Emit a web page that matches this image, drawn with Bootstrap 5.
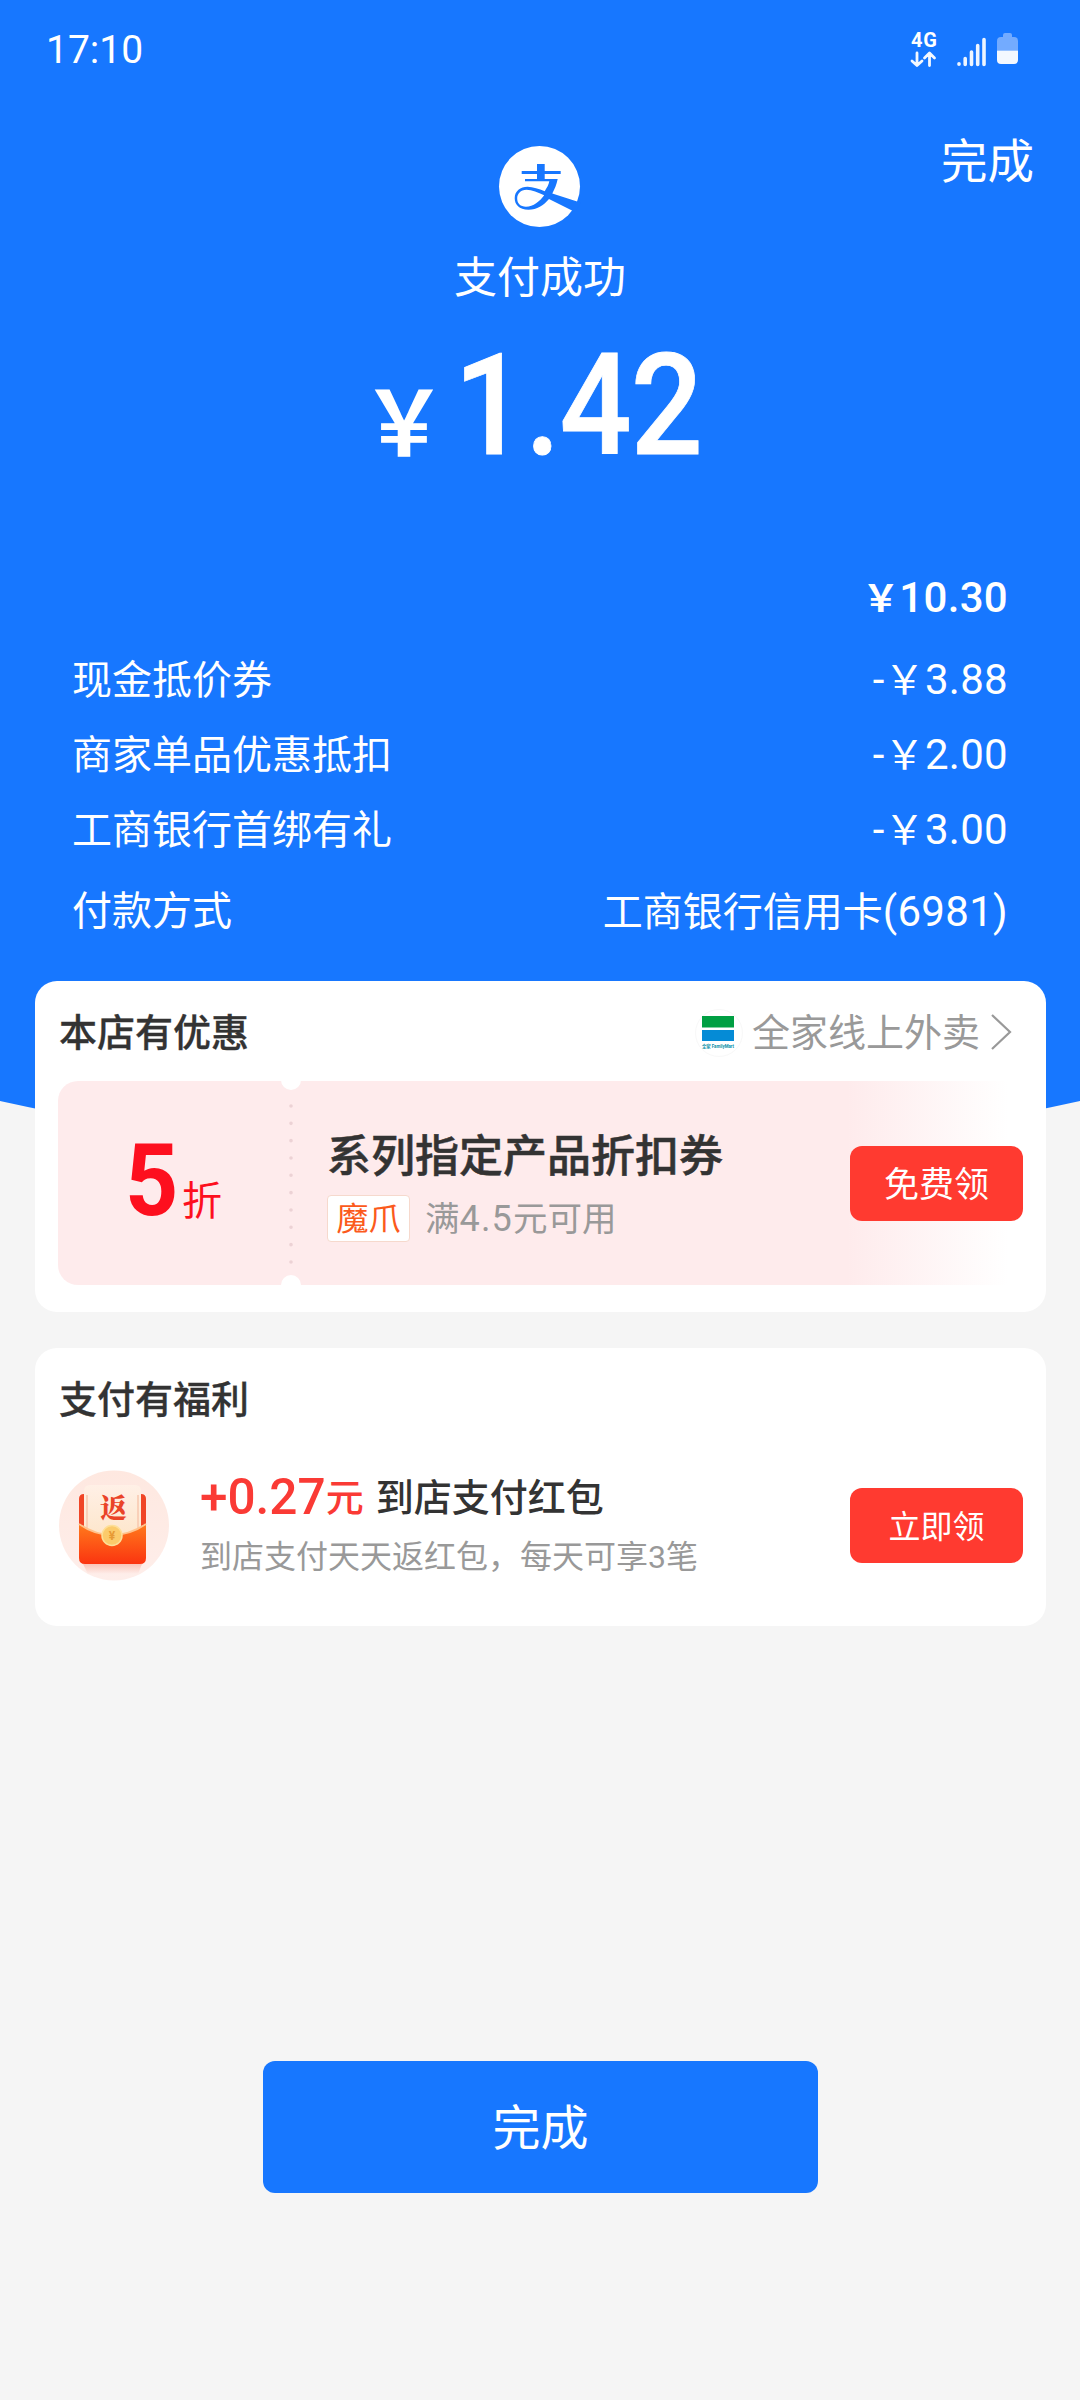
<!DOCTYPE html>
<html lang="zh-CN">
<head>
<meta charset="utf-8">
<meta name="viewport" content="width=device-width, initial-scale=1">
<title>支付成功</title>
<link rel="stylesheet" href="https://cdn.jsdelivr.net/npm/bootstrap@5.3.0/dist/css/bootstrap.min.css">
<style>
body{background:#f5f5f5;color:#333;font-family:Roboto,"Noto Sans CJK SC",sans-serif;min-height:2400px;line-height:1}
svg{display:block;flex:none;overflow:visible}
.pay-hero{height:1170px;background:#1777ff;clip-path:circle(2500px at 50% -1340px);color:#fff}
.status-bar{height:100px;padding:0 61px 0 46px}
.clock{font-size:39px;line-height:100px}
.side-col{width:300px}
.done-link{font-size:46.5px;line-height:60px;margin-top:32px;padding-right:46px;color:#fff}
.pay-logo{margin:46px 1px 0 0}
.pay-state{font-size:43px;line-height:60px;margin-top:21px}
.pay-total{height:140px;line-height:140px;margin-top:28px;width:366px;padding-left:2px}
.yen-big{font-size:90px;font-weight:700;display:inline-block;line-height:1;transform:translateY(2px) scaleX(.95)}
.num-big{font-size:141px;font-weight:500;display:inline-block;transform:scaleX(.9);transform-origin:0 50%;margin-left:5px;letter-spacing:-1px;-webkit-text-stroke:.8px #fff}
.bill{padding:0 72px;margin-top:85px}
.bill-line{height:75px;line-height:75px;font-size:40px}
.bill-num{font-size:42px;letter-spacing:.3px}
.bill-num .y{font-size:40px}
.bill-total{font-weight:500;line-height:74px}
.bill-total .y{font-weight:700;font-size:37px;letter-spacing:0}
.minus{line-height:74px}
.gap-row{margin-top:6.5px}
.panel{width:1011px;margin-left:35px;background:#fff;border-radius:22px;border:0}
.offers{margin-top:-189px;height:331px;padding:0 23px}
.panel-title{font-size:38px;font-weight:500;line-height:54px;padding-left:1px;-webkit-text-stroke:.3px #333}
.offers-head{height:100px;padding-right:11px;padding-top:3px}
.shop{font-size:38px;color:#999}
.shop svg:first-child{margin-right:9px}
.coupon{position:relative;height:204px;border-radius:20px;background:linear-gradient(90deg,#feebec 0,#feebec 790px,#fff 950px)}
.notch{position:absolute;left:223px;width:20px;height:20px;border-radius:50%;background:#fff}
.notch-top{top:-11px}
.notch-bottom{bottom:-10px}
.dots{position:absolute;left:231px;top:23px}
.discount{width:233px;color:#fd0f1e;padding:0 0 4px 67px}
.discount b{font-size:101px;line-height:118px;font-weight:700;display:inline-block;width:57px;transform:scaleX(.92);transform-origin:0 50%}
.discount span{font-size:40px}
.c-body{padding:6px 0 0 36px}
.c-title{font-size:44px;font-weight:500;line-height:56px;-webkit-text-stroke:.5px #333}
.c-meta{margin-top:8px}
.tag{width:83px;height:47px;background:#fff;border:1px solid #f6d9cd;border-radius:4px;font-size:32px;color:#fb5a1c;line-height:46px}
.cond{font-size:34.5px;color:#999;line-height:47px;padding-top:3px;margin-left:15px}
.cond span{font-size:36px;letter-spacing:1.2px}
.grab{width:173px;height:75px;background:#ff3a30;border-radius:12px;color:#fff;padding:4px 0 0;border:0;line-height:71px;font-size:35px}
.grab:hover{background:#ff3a30;color:#fff}
.grab-sm{font-size:32px;margin-top:1px}
.welfare{margin-top:36px;height:278px;padding:25px 23px 0}
.welfare-row{height:110px;margin-top:43px}
.w-body{padding:0 0 3px 31px}
.w-title{font-size:38px;font-weight:500;line-height:52px}
.w-title .cjk{position:relative;top:-3px}
.money{color:#fa3a35;font-weight:500;font-size:49.5px}
.unit{color:#fa3a35}
.w-sub{font-size:32px;color:#999;line-height:40px;margin-top:10px}
.main-btn{width:555px;height:132px;margin:435px auto 0 263px;background:#1777ff;color:#fff;border-radius:12px;font-size:48px;line-height:132px;padding:2px 0 0;border:0}
</style>
<script src="https://cdn.jsdelivr.net/npm/bootstrap@5.3.0/dist/js/bootstrap.bundle.min.js"></script>
</head>
<body>
<header class="pay-hero">
  <div class="status-bar d-flex justify-content-between align-items-center">
    <span class="clock">17:10</span>
    <!-- network, signal and battery -->
    <svg width="108" height="46" viewBox="0 -5 108 46">
      <text x="0" y="15" font-family="Roboto" font-weight="700" font-size="20" fill="#fff" textLength="26">4G</text>
      <g fill="none" stroke="#f4f8ff" stroke-width="2.8" stroke-linecap="round" stroke-linejoin="round">
        <path d="M6 21V33.500M1 29L6 33.500L11 29M18.500 33.500V21.500M13.500 26L18.500 21L23.500 26"/>
      </g>
      <g stroke="#eef5ff" stroke-width="3.600" stroke-linecap="round"><path d="M48 31.800V32.300M54.200 26.500V32.500M60.500 20V32.500M66.700 13.500V32.500M73 7.500V32.500"/></g>
      <path d="M92 3a2 2 0 0 1 2-2h5a2 2 0 0 1 2 2V5h2a4 4 0 0 1 4 4v9.500H86V9a4 4 0 0 1 4-4h2z" fill="#73abff"/>
      <path d="M86 18.500h21V28a4 4 0 0 1-4 4H90a4 4 0 0 1-4-4z" fill="#f4f8ff"/>
    </svg>
  </div>
  <div class="d-flex justify-content-between align-items-start">
    <div class="side-col"></div>
    <div class="d-flex flex-column align-items-center">
      <svg class="pay-logo" width="81" height="81" viewBox="0 0 81 81">
        <circle cx="40.500" cy="40.500" r="40.500" fill="#fff"/>
        <path fill="#1777ff" fill-rule="evenodd" d="M22.700 25H38V18H45.700V25H61.700V28H45.700V33H58.700C57.500 38.500 55.700 43 53.300 47.500L82 56.700L76 66L50 53C44.500 59.500 38 63.700 29.500 63.700C20 63.700 15.700 58.500 15.700 52.300C15.700 45 21.500 40.800 28.500 40.800C34 40.800 40 43 45.700 45.200C48 41.800 49.700 38.500 50.300 35.300H26V33H38V28H22.700ZM45.200 49.300C39 46.300 33 43.800 27.500 43.800C21.500 43.800 18.200 48 18.200 52.500C18.200 57.500 21.500 60.700 27 60.700C34.500 60.700 40.500 55.500 45.200 49.300Z"/>
      </svg>
      <div class="pay-state">支付成功</div>
      <div class="pay-total text-nowrap"><span class="yen-big">￥</span><span class="num-big">1.42</span></div>
    </div>
    <div class="side-col text-end"><a class="done-link d-block text-decoration-none" href="#">完成</a></div>
  </div>
  <div class="bill">
    <div class="bill-line d-flex justify-content-end"><span class="bill-num bill-total"><span class="y">￥</span>10.30</span></div>
    <div class="bill-line gap-row d-flex justify-content-between"><span>现金抵价券</span><span class="bill-num minus">-<span class="y">￥</span>3.88</span></div>
    <div class="bill-line d-flex justify-content-between"><span>商家单品优惠抵扣</span><span class="bill-num minus">-<span class="y">￥</span>2.00</span></div>
    <div class="bill-line d-flex justify-content-between"><span>工商银行首绑有礼</span><span class="bill-num minus">-<span class="y">￥</span>3.00</span></div>
    <div class="bill-line gap-row d-flex justify-content-between"><span>付款方式</span><span>工商银行信用卡<span class="bill-num">(6981)</span></span></div>
  </div>
</header>

<main>
  <section class="panel offers position-relative">
    <div class="offers-head d-flex justify-content-between align-items-center">
      <span class="panel-title">本店有优惠</span>
      <span class="shop d-flex align-items-center">
        <svg width="48" height="48" viewBox="0 0 48 48">
          <circle cx="24" cy="24" r="23.500" fill="#fff" stroke="#f8f8f8"/>
          <path d="M7 7H39V18.500H7z" fill="#009f43"/><path d="M7 21H39V32H7z" fill="#058bd6"/>
          <text x="7" y="39" font-size="5" font-weight="700" fill="#0b8fa8" textLength="32" lengthAdjust="spacingAndGlyphs">全家 FamilyMart</text>
        </svg>
        <span>全家线上外卖</span>
        <svg width="32" height="38" viewBox="0 0 32 38"><path d="M12 1L30 18L12 35" fill="none" stroke="#999" stroke-width="2.200"/></svg>
      </span>
    </div>
    <div class="coupon d-flex align-items-center">
      <i class="notch notch-top"></i><i class="notch notch-bottom"></i>
      <svg class="dots" width="4" height="162" viewBox="0 0 4 162"><path d="M2 2V161" stroke="#ecd2d5" stroke-width="3.600" stroke-linecap="round" stroke-dasharray="0 17.330"/></svg>
      <div class="discount text-nowrap"><b>5</b><span>折</span></div>
      <div class="c-body flex-grow-1">
        <div class="c-title">系列指定产品折扣券</div>
        <div class="c-meta d-flex align-items-center"><span class="tag text-center">魔爪</span><span class="cond">满<span>4.5</span>元可用</span></div>
      </div>
      <button class="btn grab">免费领</button>
    </div>
  </section>

  <section class="panel welfare">
    <div class="panel-title">支付有福利</div>
    <div class="welfare-row d-flex align-items-center">
      <svg width="111" height="111" viewBox="0 0 111 111">
        <defs>
          <linearGradient id="disc" x1="0" y1="0" x2="0" y2="1"><stop offset="0" stop-color="#fee8e0"/><stop offset="1" stop-color="#feeeea"/></linearGradient>
          <linearGradient id="env" x1="0" y1="0" x2="0" y2="1"><stop offset="0" stop-color="#ff7a1c"/><stop offset="1" stop-color="#fb3410"/></linearGradient>
          <linearGradient id="slip" x1="0" y1="0" x2="0" y2="1"><stop offset="0" stop-color="#fff0e6"/><stop offset="1" stop-color="#fde6cb"/></linearGradient>
          <linearGradient id="shade" x1="0" y1="0" x2="0" y2="1"><stop offset="0" stop-color="#fac4b8"/><stop offset="1" stop-color="#feeeea"/></linearGradient>
        </defs>
        <circle cx="56" cy="55.500" r="55" fill="url(#disc)"/>
        <path d="M25 94H84L80 104H30z" fill="url(#shade)"/>
        <path d="M21 29q0-5 5-5H83q5 0 5 5V60H21z" fill="#f04526"/>
        <path d="M26 58V21q0-6 6-6H77q6 0 6 6V58Q70 68 54 67Q38 68 26 58z" fill="url(#slip)"/>
        <path d="M29 25V59M80 25V59" stroke="#f8c7ae" stroke-width="1.500"/>
        <path d="M21 54Q37 65 54 65Q72 65 88 54V88q0 6-6 6H27q-6 0-6-6z" fill="url(#env)"/>
        <path d="M21 54Q37 65 54 65Q72 65 88 54" fill="none" stroke="#ffc28b" stroke-width="2"/>
        <circle cx="54" cy="65.500" r="10" fill="#fbcb6b" stroke="#fddf98" stroke-width="1.500"/>
        <text x="54" y="70" text-anchor="middle" font-size="12" font-weight="700" font-family="Roboto" fill="#e79a35">¥</text>
        <text x="55.500" y="48" text-anchor="middle" font-size="27" font-weight="900" font-family="'Noto Serif CJK SC','Noto Sans CJK SC',serif" fill="#ea4428">返</text>
      </svg>
      <div class="w-body flex-grow-1">
        <div class="w-title text-nowrap"><span class="money">+0.27</span><span class="cjk"><span class="unit">元</span><span class="ms-2 ps-1">到店支付红包</span></span></div>
        <div class="w-sub text-nowrap">到店支付天天返红包，每天可享3笔</div>
      </div>
      <button class="btn grab grab-sm">立即领</button>
    </div>
  </section>

  <button class="btn main-btn d-block">完成</button>
</main>
</body>
</html>
